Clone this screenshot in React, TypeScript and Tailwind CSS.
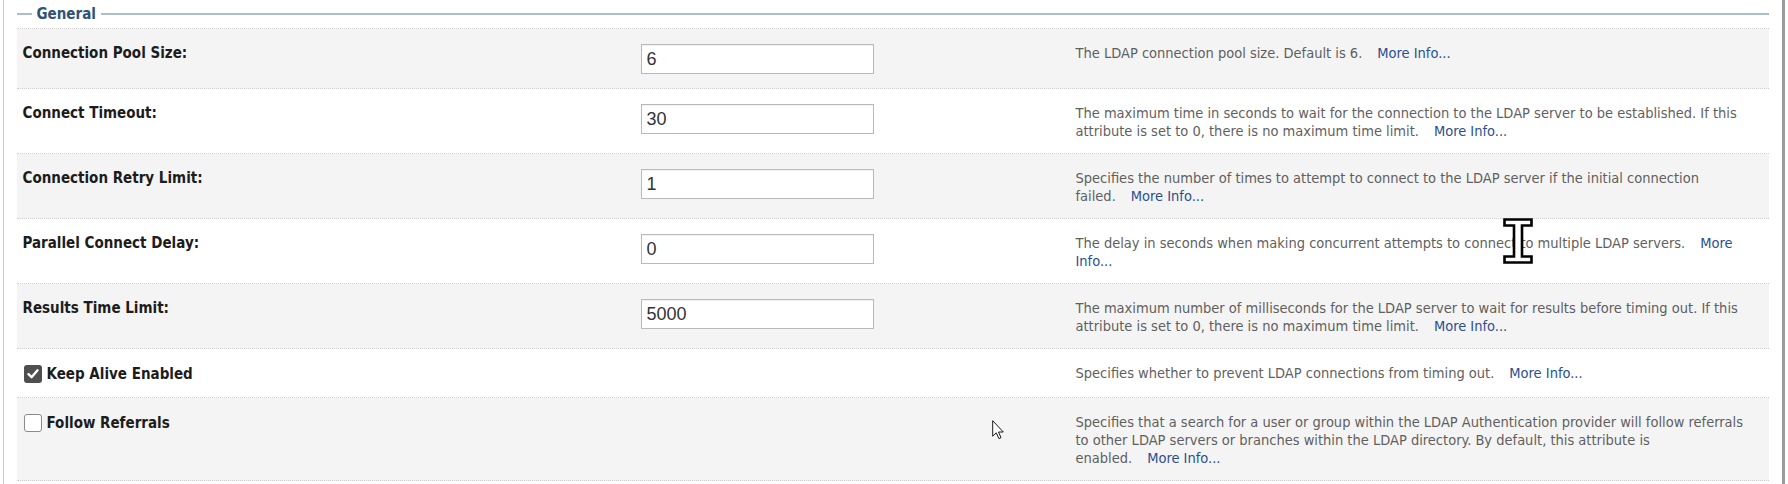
import React from "react";

const font = { fontFamily: '"DejaVu Sans Condensed", "DejaVu Sans", sans-serif' };

type Row = {
  label: string;
  kind: "input" | "checkbox";
  value?: string;
  checked?: boolean;
  lines: string[];
  split?: boolean;
};

const rows: Row[] = [
  { label: "Connection Pool Size:", kind: "input", value: "6", lines: ["The LDAP connection pool size. Default is 6."] },
  {
    label: "Connect Timeout:",
    kind: "input",
    value: "30",
    lines: [
      "The maximum time in seconds to wait for the connection to the LDAP server to be established. If this",
      "attribute is set to 0, there is no maximum time limit.",
    ],
  },
  {
    label: "Connection Retry Limit:",
    kind: "input",
    value: "1",
    lines: ["Specifies the number of times to attempt to connect to the LDAP server if the initial connection", "failed."],
  },
  {
    label: "Parallel Connect Delay:",
    kind: "input",
    value: "0",
    split: true,
    lines: ["The delay in seconds when making concurrent attempts to connect to multiple LDAP servers."],
  },
  {
    label: "Results Time Limit:",
    kind: "input",
    value: "5000",
    lines: [
      "The maximum number of milliseconds for the LDAP server to wait for results before timing out. If this",
      "attribute is set to 0, there is no maximum time limit.",
    ],
  },
  {
    label: "Keep Alive Enabled",
    kind: "checkbox",
    checked: true,
    lines: ["Specifies whether to prevent LDAP connections from timing out."],
  },
  {
    label: "Follow Referrals",
    kind: "checkbox",
    checked: false,
    lines: [
      "Specifies that a search for a user or group within the LDAP Authentication provider will follow referrals",
      "to other LDAP servers or branches within the LDAP directory. By default, this attribute is",
      "enabled.",
    ],
  },
];

function Checkbox({ checked }: { checked: boolean }) {
  if (checked) {
    return (
      <span className="mt-px flex h-[18px] w-[18px] shrink-0 items-center justify-center rounded-[3px] bg-[#4f4f4f]">
        <svg width="14" height="14" viewBox="0 0 14 14">
          <path d="M2.5 7.2 L5.6 10.2 L11.5 3.3" fill="none" stroke="#ffffff" strokeWidth="2.4" strokeLinecap="round" strokeLinejoin="round" />
        </svg>
      </span>
    );
  }
  return <span className="mt-px block h-[18px] w-[18px] shrink-0 rounded-[3px] border-[1.5px] border-[#8a8a8a] bg-white" />;
}

function Link({ children }: { children: React.ReactNode }) {
  return <span className="ml-[15px] text-[#2b4f90]">{children}</span>;
}

function Description({ row }: { row: Row }) {
  if (row.split) {
    return (
      <div className="text-[14.5px] leading-[18px] text-[#5f5f5f] [font-stretch:condensed]" style={font}>
        <div className="whitespace-nowrap">
          {row.lines[0]}
          <Link>More</Link>
        </div>
        <div className="whitespace-nowrap text-[#2b4f90]">Info...</div>
      </div>
    );
  }
  return (
    <div className="text-[14.5px] leading-[18px] text-[#5f5f5f] [font-stretch:condensed]" style={font}>
      {row.lines.map((l, i) => (
        <div key={i} className="whitespace-nowrap">
          {l}
          {i === row.lines.length - 1 && <Link>More Info...</Link>}
        </div>
      ))}
    </div>
  );
}

export default function App() {
  return (
    <div className="relative h-[484px] w-[1788px] overflow-hidden bg-white">
      <div className="ml-[3px] h-[484px] w-[1782px] border-l-[1.5px] border-r-[3px] border-l-[#cdcdcd] border-r-[#9c9c9c] pl-[12.5px] pr-[13px]">
        {/* legend */}
        <div className="flex h-[28px] items-center">
          <div className="h-[2px] w-[15px] bg-[#abbecd]" />
          <div
            className="px-[5px] text-[15px] font-bold leading-[18px] text-[#2f5276] [font-stretch:condensed]"
            style={font}
          >
            General
          </div>
          <div className="h-[2px] flex-1 bg-[#abbecd]" />
        </div>

        <div className="border-t border-dotted border-[#cfcfcf]">
          {rows.map((row, idx) => (
            <div
              key={row.label}
              className={`grid grid-cols-[618px_435px_1fr] border-b border-dotted border-[#cfcfcf] pb-[13px] pl-[6px] pt-[15px] ${
                row.kind === "input" ? "min-h-[60px]" : "min-h-[49px]"
              } ${idx % 2 === 0 ? "bg-[#f4f4f4]" : "bg-white"}`}
            >
              <div>
                {row.kind === "input" ? (
                  <div
                    className="text-[15px] font-bold leading-[18px] text-[#1c1c1c] [font-stretch:condensed]"
                    style={font}
                  >
                    {row.label}
                  </div>
                ) : (
                  <div className="ml-px flex items-start gap-[5px]">
                    <Checkbox checked={!!row.checked} />
                    <span
                      className="text-[15px] font-bold leading-[18px] text-[#1c1c1c] [font-stretch:condensed]"
                      style={{ ...font, marginTop: "1px" }}
                    >
                      {row.label}
                    </span>
                  </div>
                )}
              </div>
              <div>
                {row.kind === "input" && (
                  <input
                    type="text"
                    readOnly
                    defaultValue={row.value}
                    className="h-[30px] w-[233px] border border-[#b9b9b9] bg-white px-[5px] text-[18px] text-[#333333] shadow-[inset_0_1px_1px_rgba(0,0,0,0.06)] outline-none"
                    style={{ fontFamily: '"Liberation Sans", Arial, sans-serif' }}
                  />
                )}
              </div>
              <Description row={row} />
            </div>
          ))}
        </div>
      </div>

      {/* I-beam text cursor */}
      <svg className="absolute left-[1503px] top-[218px]" width="30" height="46" viewBox="0 0 30 46">
        <path
          d="M1.5 1.5 H28.5 V7.5 H19 V38.5 H28.5 V44.5 H1.5 V38.5 H11 V7.5 H1.5 Z"
          fill="#ffffff"
          stroke="#000000"
          strokeWidth="2.6"
          strokeLinejoin="miter"
        />
      </svg>

      {/* arrow mouse pointer */}
      <svg className="absolute left-[992px] top-[420px]" width="13" height="20" viewBox="0 0 13 20">
        <path
          d="M0.7 0.7 L0.7 16.2 L4.3 12.8 L6.9 18.6 L9 17.7 L6.5 12 L11.3 12 Z"
          fill="#ffffff"
          stroke="#1a1a1a"
          strokeWidth="1"
          strokeLinejoin="round"
        />
      </svg>
    </div>
  );
}
